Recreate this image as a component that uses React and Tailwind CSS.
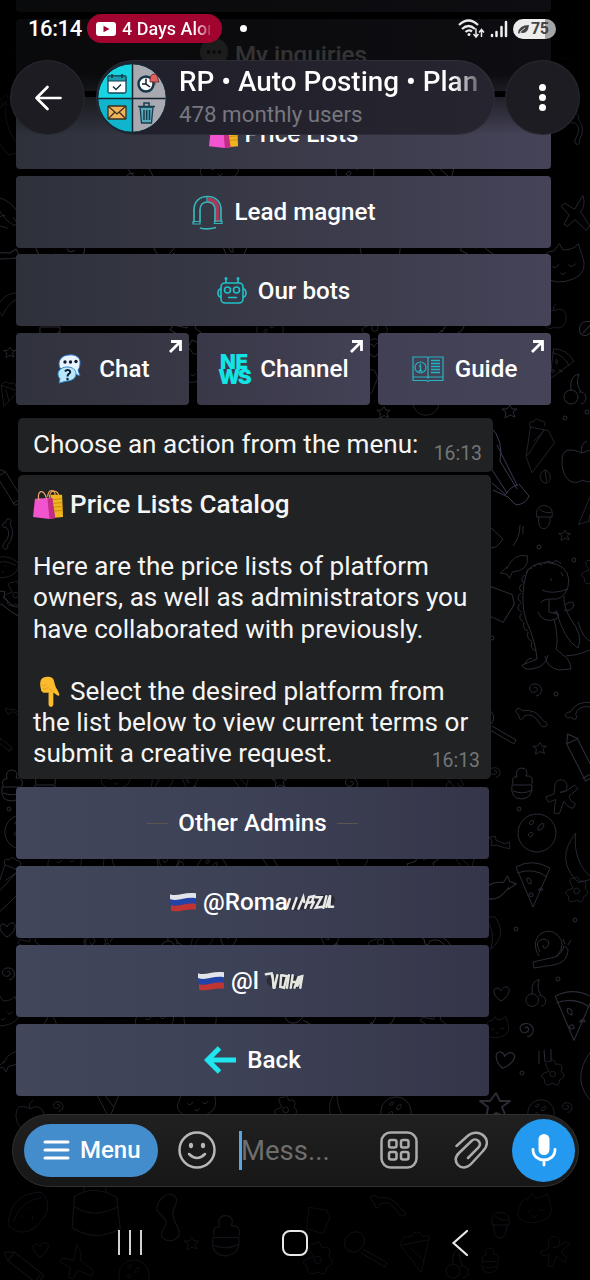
import { clsx } from "clsx";

const Bags = ({ className }) => (
  <svg viewBox="0 0 32 32" className={className} fill="none">
    <path d="M17 9c0-9 9-9 10 0M15 8c1-8 7-8 8-2" stroke="#e9a45b" strokeWidth="1.3" />
    <path d="M18 6h12l1 23-11 1z" fill="#efb51f" />
    <path d="M19 11l11-1M19 15l11-1M19 19l12-1M19 23l12-1" stroke="#c98b14" strokeWidth="1" />
    <path d="M2 10l17-1 4 21-6 1-17-2z" fill="#f253cf" />
    <path d="M15 10l5-1 3 21-6 1z" fill="#c22c83" />
    <path d="M6 12C4 1 11-1 14 10" stroke="#f0a070" strokeWidth="1.3" />
  </svg>
);

const HandDown = ({ className }) => (
  <svg viewBox="0 0 24 32" className={className}>
    <path
      d="M3 4c2-4 9-4 12-2 2 2 2 5 3 8 1 3 3 5 4 8 1 2-1 3-2 2l-4-3v12c0 4-5 4-5 0V17c-4 1-8 0-8-4-1-3-1-6 0-9z"
      fill="#fbbb2d"
    />
    <path d="M4 9c3 2 4 1 5-1M5 13c3 1 5 0 6-2M15 16l-3-3" stroke="#e39a20" strokeWidth="1" fill="none" />
  </svg>
);

const Flag = () => (
  <svg viewBox="0 0 27 20" className="h-5 w-[26px]">
    <path d="M0 2c8 3 15-3 27-1v6c-12-2-18 4-27 1z" fill="#e3e3ea" />
    <path d="M0 7c9 3 16-3 27-1v7c-12-2-17 4-26 1z" fill="#2343a6" />
    <path d="M1 13c9 3 15-3 26-1v6c-11-1-16 3-26 1z" fill="#c03431" />
  </svg>
);

const Magnet = () => (
  <svg viewBox="0 0 32 36" className="h-9 w-8" fill="none" stroke="#35b5b8" strokeWidth="1.7">
    <path d="M16 3.500c7 0 11.500 5 11.500 11.500v13h-4.500V16c0-4-2.500-7-7-7z" fill="#a43b5a" stroke="none" />
    <path d="M2 28.500V16C2 8 7 2.500 15.500 2.500S29 8 29 16v12M8 28V16c0-5 3-8 7.500-8S23 11 23 16v12" />
    <path d="M1 27.500h7v2.500H1zM22.500 27h7.500v2.500h-7.500z" strokeWidth="1.2" />
    <path d="M15 2v6" strokeWidth="1.200" />
    <path d="M8 34c4 1 11 1 16-.5" />
  </svg>
);

const Robot = () => (
  <svg viewBox="0 0 30 28" className="h-7 w-[30px]" fill="none" stroke="#1fc2c9" strokeWidth="1.6">
    <rect x="4" y="6" width="22" height="20" rx="4" />
    <path d="M9 6V2M21 6V2M4 12c-4 0-4 8 0 8M26 12c4 0 4 8 0 8M11 20.500h9" />
    <circle cx="10.500" cy="13" r="3" />
    <circle cx="19.500" cy="13" r="3" />
    <circle cx="9" cy="1.500" r=".7" />
    <circle cx="21" cy="1.500" r=".7" />
  </svg>
);

const ChatBubbles = () => (
  <svg viewBox="0 0 28 32" className="h-8 w-7">
    <path
      d="M14 2c7-1 12 3 11 9-.2 3-1 5-2 6l2 6-7-3c-8 1-14-3-14-9C4 6 8 2 14 2z"
      fill="#eaf4ff"
      stroke="#2e73c9"
      strokeWidth="1"
    />
    <path
      d="M12 14c6 0 9 3 9 7s-4 7-9 7l-8 2 1-4c-5-6 0-12 7-12z"
      fill="#b9e7fb"
      stroke="#2c88cf"
      strokeWidth="1"
    />
    <g fill="#121c2b">
      <circle cx="10" cy="9" r="1.700" />
      <circle cx="15.500" cy="9" r="1.700" />
      <circle cx="21" cy="8.500" r="1.700" />
      <circle cx="12.500" cy="26" r="1.200" />
    </g>
    <path d="M10 18.500c2-3 6-1 5 1-.5 1.500-2.500 1.500-2.500 4" stroke="#121c2b" strokeWidth="2" fill="none" />
  </svg>
);

const News = () => (
  <span className="flex w-[31px] flex-col items-center font-['Inter'] text-[20.500px] leading-[15.500px] font-black text-[#14e3e6]">
    <span className="tracking-[-0.3px]">NE</span>
    <span className="tracking-[-2.2px]">WS</span>
  </span>
);

const Book = () => (
  <svg viewBox="0 0 32 26" className="h-[26px] w-8" fill="none" stroke="#25b4c1" strokeWidth="1.2">
    <path d="M1 1h14l1 1 1-1h14v20H17l-1 1-1-1H1zM1 21v3.500h13.500l1.500 1 1.500-1H31V21M16 2v20" />
    <circle cx="8.500" cy="11.500" r="5.500" />
    <path d="M7 10h1.500v5M6.500 15h4M8.500 7.500v1.300M19 4.500h9M19 7.500h9M19 10.500h9M19 13.500h9M19 16.500h9" strokeWidth="1.400" />
  </svg>
);

const ArrowLeftCyan = () => (
  <svg viewBox="0 0 32 28" className="h-7 w-8" fill="none" stroke="#1fe6ee" strokeWidth="5">
    <path d="M32 14H5M15.500 2L3.500 14l12 12" />
  </svg>
);

const External = () => (
  <svg viewBox="0 0 13 13" className="absolute top-[7px] right-[7px] size-[13px]" fill="none" stroke="#fff" strokeWidth="2.800">
    <path d="M1 12L11 2M2 1.500h9.500V11" />
  </svg>
);

// strokes that hide the end of a user name
const Smudge = ({ long }) => (
  <svg
    viewBox={long ? "0 0 52 24" : "0 0 46 24"}
    className={clsx("h-6 blur-[0.4px]", long ? "-ml-[3px] w-[50px]" : "w-11")}
    fill="none"
    strokeLinecap="round"
  >
    <path d={long ? "M10 15L46 10" : "M10 12L36 13"} stroke="#1b1b1d" strokeWidth="12" opacity=".55" />
    {long ? (
      <g stroke="#e9e9e7" strokeWidth="2.600">
        <path d="M2 18L5 9M8 19L12 8M14 19l5-12 1 5" />
        <path d="M21 18l4-11 5-1-2 6-5 1M27 18l3-6" />
        <path d="M32 7h6l-6 11 7-1M40 18l3-12M43 17l4-12-1 12h4" />
      </g>
    ) : (
      <g stroke="#e4e7e0" strokeWidth="2.600">
        <path d="M3 5l6-1 1 5M10 6l1 13M15 6l-3 13M19 6l-1 12 4 1 3-12-5-1" />
        <path d="M27 6l-2 13M31 6l-2 13M30 13h4M33 19l4-11 4-1-2 12M36 17l4-9" />
      </g>
    )}
  </svg>
);

const KeyButton = ({ icon, children, external, className }) => (
  <div
    className={clsx(
      "relative flex h-[72px] min-w-0 flex-1 items-center justify-center rounded-[4px] bg-linear-to-r pt-px text-[24.200px] font-medium text-white",
      className,
    )}
  >
    {icon}
    {children}
    {external && <External />}
  </div>
);

const wide = "from-[#2e313a] via-[#3a3a49] via-50% to-[#454358]";
const lower = "from-[#41465a] via-[#3d4155] to-[#35354a]";

const doodles = {
  star: "M0-6l2 4 5 0-4 3 2 5-5-2-5 3 1-6-4-3 5 0z",
  dot: "M-2 0a2 2 0 1 0 4 0a2 2 0 1 0-4 0",
  spiral: "M0 0c3-3 5 3 1 4-6 2-8-7-1-8 9-1 10 11 2 12",
  heart: "M0 7C-8 2-9-6-4-6c3 0 4 3 4 3s2-5 6-4c5 2 1 10-6 14z",
  ball: "M-19 0a19 19 0 1 0 38 0a19 19 0 1 0-38 0M-8-10q4-5 5-1q-3 5-5 1M1-6q5-6 6-2q-2 6-6 5zM-9 2q4-5 5-1q-2 5-5 1",
  pizza: "M-17-17q16-9 34 1L0 23zM-16-11q17-6 30 4M-6-6q5 0 4 6q-5-1-4-6M5 6q4-4 5 0zM-4 10q4-3 4 2q-4 2-4-2",
  snail: "M-9 7q-7-12 4-13q8 2 3 8q-4 3-4-2M-10 11C-20-5-7-17 4-13Q16-7 12 5L7 12M-16 17l22-5q7-3 9-11q6 2 3 9q-2 8-14 10l-19 3zM16-1l-2-5M19 0l3-5",
  cake: "M-16 20l6-40 24 5 8 16-30 40zM-10-20q-4-8 4-7q3-7 9-1q8-1 6 7M-14 18L8-16M-6-1l13-13",
  leaf: "M0-9q-10 7-4 14q6 6 10-1q3-9-6-13zM0-9l2 15",
  acorn: "M-8 0q-2-12 8-13q11 1 9 13zM-6 0q-1 13 6 13q7-1 7-13M-5-9q5 5 13 4",
  fish: "M-8 4Q0-14 15-10q2 16-17 18l-3 7-3-5-7-1 7-7z",
  candy: "M-10 4l-6 2 3-9 6 2 10-8 2-7 8 4-5 6-9 8-3 7z",
  mag: "M-12-12a9 9 0 1 0 13 12a9 9 0 1 0-13-12M3 1l24 14-2 4L1 5",
  bone: "M-16-3q-5-2-2-6q4-2 6 2q15-3 24 12q5 0 3 5q-4 3-7-2Q0-6-10-1q-1 5-5 3z",
  cupcake: "M-10 2q-2 14 10 14q11-1 10-14zM-9 1q-2-8 4-7q-2-9 5-9q7 1 4 8q8-1 6 8M-9 8q10 4 19-1",
  ginger: "M-8-8a7 7 0 1 1 6 5l6-1 10-7 4 4-10 8q0 5 7 9l-3 5q-7-2-10-8l-5 14-6-1 2-15-8 3-3-6 9-3z",
  pencil: "M-12-18l9 3 20 32-9 6-20-32zM-12-9l10-6M5 21l9-6",
  moon: "M2-30Q-22 0 5 25l16-4Q-2 2 2-30z",
  flower: "M-4-4Q-15-20-2-18Q3-24 5-14Q18-16 13-4Q22 4 11 8Q10 20 1 13Q-12 20-11 7Q-22 1-4-4zM-3 0a4 4 0 1 0 8 0a4 4 0 1 0-8 0",
  cat: "M-22-6q2-14 12-13l6-8 4 7q12 0 17-7l4 12q8 20-9 27-20 8-32-2-8-6-2-16zM-12-2q4 4 7-2M6-4q4 5 8-1M-3 5q3 5 6-1",
  plane: "M-4-22q8 11 4 20l17 13-2 7-18-8-6 11-5-1 2-13-13-7 3-5 14 3z",
  rocket: "M-18-20q22 3 32 28l-9 8Q-17 1-18-20zM4 5l10 15M-6 3q-12 0-7 13l10 3",
  cherry: "M-9 9a7 7 0 1 0 14 0a7 7 0 1 0-14 0M6 4a6 6 0 1 1 2 12M-2 2Q-4-12 6-14M8 4Q2-5 6-14",
  bag: "M-17-9q17-10 35 1l3 26q-20 12-40-1zM-9-12q-1-15 9-15t9 15M-17 0q16 10 36 0",
  apple: "M0-12q-20-9-20 8c0 20 12 25 20 19 12 6 22-5 20-20Q15-20 0-12M0-12q-3-8 5-12",
  watermelon: "M-22 15Q-20-22 15-22q15 15-2 34t-35 3zM-16 11Q-10-12 15-16M2-6v3M-6 3v3M5 5v3",
  worm: "M-9-22c-8 12 12 12 4 22s8 14 12 7-9-14-3-25-8-14-13-4",
  cone: "M-18-12L8 22 17-19zM-18-12q0-13 13-11q7-12 15 0q11-4 7 5M-6-9l17 16",
  tag: "M-20-16l22 4 4 9-8 20-21-6z",
};

// [name, x, y, rotation, scale]
const scattered = [
  ["bone", 578, 130, 60, 0.8], ["plane", 580, 213, 20, 0.8], ["cat", 563, 268, 0, 0.9], ["apple", 554, 318, 0, 0.6],
  ["leaf", 586, 328, 50], ["pizza", 558, 365, 30, 0.7], ["cherry", 573, 388], ["cake", 538, 442, 0, 0.75],
  ["apple", 582, 465, 0, 1], ["leaf", 545, 477, 0, 0.8], ["acorn", 544, 517, 0, 0.9], ["star", 565, 535, 0, 0.8],
  ["dot", 565, 418], ["dot", 539, 547], ["fish", 514, 565, 0, 0.9], ["cone", 589, 512, 60, 0.7], ["tag", 508, 606, 10],
  ["flower", 592, 573, 0, 0.7], ["dot", 574, 560], ["dot", 492, 638], ["spiral", 534, 688], ["dot", 556, 694],
  ["bone", 533, 717, 0, 0.9], ["bone", 582, 708, -50, 0.9], ["star", 540, 748, 0, 0.9], ["mag", 489, 725], ["pencil", 579, 755, 5, 1.1],
  ["cupcake", 522, 783], ["ginger", 562, 795, 0, 0.9], ["dot", 519, 809], ["ball", 537, 833], ["candy", 498, 845, 60, 0.7],
  ["moon", 574, 860, 0, 0.9], ["pizza", 533, 884], ["fish", 500, 890, 190], ["flower", 576, 891, 0, 0.7], ["dot", 516, 929],
  ["dot", 575, 920], ["snail", 549, 945], ["spiral", 494, 771, 0, 0.8], ["moon", 495, 932, 190, 0.6], ["heart", 501, 994],
  ["cherry", 534, 992, 0, 0.9], ["dot", 558, 979], ["pizza", 574, 1015, 0, 1.1], ["spiral", 525, 1028, 0, 1.1],
  ["cat", 497, 1030, 0, 0.5], ["flower", 552, 1074, 0, 0.7], ["heart", 504, 1060, 10, 1.2], ["dot", 522, 1073],
  ["star", 496, 1105, 0, 2], ["ball", 541, 1113, 0, 0.7], ["spiral", 566, 1106, 0, 0.8], ["moon", 590, 1080],
  ["star", 384, 412, 0, 0.9], ["ball", 426, 402, 0, 0.7], ["dot", 587, 412], ["star", 510, 411],
  ["rocket", 10, 213, 0, 0.8], ["candy", 2, 258, 40], ["moon", 10, 300, 70, 0.6], ["star", 10, 352, 0, 0.8], ["cone", 6, 395, 30, 0.5],
  ["pencil", 8, 485, 0, 0.9], ["bone", 8, 535, 70, 0.8], ["watermelon", 3, 567, 40, 0.6], ["flower", 15, 595, 0, 0.7],
  ["candy", 4, 605, 80], ["bone", 15, 713, 0, 0.5], ["pencil", 4, 744, -20, 0.4], ["cupcake", 12, 785],
  ["ball", 22, 832, 0, 0.9], ["dot", 9, 809], ["cake", 10, 882, 10, 0.8], ["heart", 7, 930], ["spiral", 7, 972], ["cat", 3, 1015, 0, 0.7],
  ["fish", 10, 1060, 0, 0.8], ["apple", 30, 1117, 0, 0.7], ["spiral", 57, 1105, 0, 0.8], ["cone", 106, 1100, 10, 0.8], ["cat", 197, 1105, 0, 0.8],
  ["flower", 285, 1110, 0, 0.7], ["ball", 396, 1112, 0, 0.8], ["moon", 336, 1110, 0, 0.7],
  ["rocket", 140, 170], ["cat", 220, 170, 0, 0.8], ["ball", 355, 172], ["cone", 440, 172],
  ["cat", 60, 250, 20], ["mag", 170, 252], ["pizza", 235, 252], ["apple", 380, 248], ["plane", 485, 250],
  ["cupcake", 50, 325], ["plane", 195, 330], ["ball", 270, 330, 0, 0.7], ["flower", 374, 328, 0, 0.8],
  ["fish", 450, 328], ["cat", 193, 370, 0, 0.8], ["tag", 373, 380, 0, 0.8], ["heart", 374, 350],
  ["cupcake", 45, 783], ["cat", 116, 780, 0, 0.6], ["cake", 160, 781, 0, 0.6], ["pizza", 190, 783, 0, 0.6], ["cone", 240, 781, 0, 0.6],
  ["star", 280, 781], ["spiral", 350, 782], ["apple", 400, 783, 0, 0.6], ["rocket", 455, 780, 0, 0.6],
  ["cat", 65, 863, 0, 0.7], ["moon", 110, 865, 0, 0.7], ["snail", 168, 860, 0, 0.8],
  ["ball", 212, 870, 0, 0.8], ["pencil", 270, 862, 0, 0.8], ["apple", 352, 856, 0, 0.8], ["ginger", 425, 862], ["cone", 465, 864, 0, 0.6],
  ["plane", 35, 943, 0, 0.7], ["snail", 95, 942, 0, 0.8], ["cherry", 170, 939], ["cake", 200, 939, 0, 0.6], ["heart", 228, 942],
  ["pizza", 330, 940, 0, 0.8], ["flower", 380, 942, 0, 0.8], ["bone", 440, 942], ["worm", 50, 1021, 0, 0.8], ["cat", 155, 1020, 0, 0.8],
  ["apple", 200, 1020, 0, 0.8], ["mag", 300, 1019], ["fish", 380, 1020], ["plane", 440, 1021, 0, 0.8],
];

const faint = [
  ["watermelon", 28, 1212, 0, 0.9], ["heart", 40, 1250], ["pencil", 22, 1265, -20], ["plane", 80, 1262, 0, 0.8], ["ball", 134, 1275, 0, 0.8],
  ["bag", 95, 1207, 0, 1.2], ["worm", 170, 1228, 0, 1.2], ["cupcake", 226, 1235, 0, 1.3], ["star", 192, 1243],
  ["tag", 325, 1220, 0, 0.8], ["bone", 390, 1205], ["flower", 317, 1260, 0, 0.9], ["mag", 360, 1248], ["cone", 415, 1255, 0, 0.8],
  ["acorn", 500, 1225], ["cherry", 455, 1262], ["cupcake", 490, 1260, 0, 0.8], ["cat", 535, 1212, 0, 0.7], ["ginger", 555, 1250, 0, 0.8],
  ["pizza", 565, 75, 0, 0.8], ["flower", 560, 25, 0, 0.8], ["spiral", 567, 55], ["star", 6, 100], ["moon", 4, 130],
  ["cone", 8, 40, 0, 0.7],
];

const Doodles = ({ items }) =>
  items.map(([name, x, y, r = 0, s = 1], i) => (
    <path key={i} d={doodles[name]} transform={`translate(${x} ${y}) rotate(${r}) scale(${s})`} />
  ));

const Wallpaper = () => (
  <svg
    viewBox="0 0 590 1280"
    className="absolute inset-0 h-[1280px] w-[590px]"
    fill="none"
    stroke="#2d2b36"
    strokeWidth="1"
    strokeLinejoin="round"
  >
    <Doodles items={scattered} />
    <g stroke="#121118">
      <Doodles items={faint} />
    </g>
    {/* balloon */}
    <path d="M490 426q14 14 10 35l17 28M491 468l16 25M492 483l14 12M497 445l20 40M493 490l15 7M506 494q5-8 12-9M507 496l9 9q10-1 13-9l-10-12" stroke="#3b3950" />
    <path d="M487 524l16 15q-6 9-11 9l-8-10M520 525q0 12-7 21M523 526v8" />
    {/* dinosaur */}
    <path d="M527 571q10-12 29-7 16 6 12 23-5 14-16 12-10 0-11 4M527 571q-8 28-1 49 10 23 11 39l-15 6q1 5 10 4 14-2 16-14M545 656q2 12 14 14l12-1q-1-10-8-14l-7-6q3-10-2-30M542 590q10 5 26-1M556 610q8 30 22 38 6-12-8-30-7-13-6-22M549 600v12l8 2M538 612q5 12 18 7 7-6-3-7M565 605q8-6 9 0-2 7-10 5M578 622q5 17 14 20M590 650q-13 6-24 6" />
    <path d="M544 564q4-5 8-1 5-5 9 1M534 567q3-5 8-2M527 573q0-5 5-5M524 583q-5-4 1-8M522 592q-5-4 0-8M521 602q-6-4 0-9M521 612q-6-4 0-9M523 621q-6-3-1-8M528 631q-6-2-4-9M532 641q-6-2-4-9M536 651q-7-3-4-9M532 658q-6 1-7 6M550 578l2 3M561 572l2 4" />
    <path d="M539 1064v-13M545 1062l-1-12M551 1061v-12" />
  </svg>
);

const StatusBar = () => (
  <div className="flex h-[57px] items-center pl-7 text-white">
    <span className="w-[52px] text-[22px] font-medium tracking-[-0.4px]">16:14</span>
    <div className="ml-[7px] flex h-[29px] w-[135px] items-center rounded-full bg-[#a1052f] pl-[9px]">
      <svg viewBox="0 0 20 14" className="h-[14px] w-5 shrink-0">
        <rect width="20" height="14" rx="3" fill="#fff" />
        <path d="M7.500 3.700v6.600l6-3.300z" fill="#a1052f" />
      </svg>
      <span className="ml-[6px] w-[88px] overflow-hidden bg-linear-to-r from-white from-82% to-transparent to-105% bg-clip-text text-[18px] font-medium whitespace-nowrap text-transparent">
        4 Days Alor
      </span>
    </div>
    <span className="ml-[18px] size-[7px] rounded-full bg-white" />
    <svg viewBox="0 0 27 20" className="ml-[211px] h-5 w-[27px]" fill="none" stroke="#e9e9e9" strokeWidth="2.300">
      <path d="M1 6q9.500-9 19 0M4 10q6.500-6 13 0M7.500 13q3.500-3 6.500-.5" />
      <circle cx="11" cy="15.500" r="1.500" fill="#e9e9e9" stroke="none" />
      <path d="M18 9.500v8M15.500 15l2.500 3 2.500-3M23.500 18v-7.500M21 13.500l2.500-3 2.500 3" strokeWidth="1.500" />
    </svg>
    <svg viewBox="0 0 18 18" className="ml-[5px] h-[18px] w-[18px]" stroke="#eee" strokeWidth="2.500" strokeLinecap="round">
      <path d="M2 16v-1M6.500 16v-4M11.500 16V7M16 16V2" />
    </svg>
    <div className="ml-[5px] flex h-5 w-[43px] items-center rounded-full bg-linear-to-r from-[#ededed] from-75% to-[#a5a5a5] to-75% pl-[5px] text-[#454545]">
      <svg viewBox="0 0 11 10" className="h-[10px] w-[11px]">
        <path d="M0 9q1-8 11-8-1 8-6 8-2 0-3-1L1 10z" fill="#454545" />
        <path d="M2 8l5-4" stroke="#ededed" strokeWidth=".8" />
      </svg>
      <span className="ml-[2px] text-[16px] font-bold tracking-[-0.5px]">75</span>
    </div>
  </div>
);

const Avatar = () => (
  <svg viewBox="0 0 70 70" className="size-[70px] shrink-0">
    <clipPath id="avatar">
      <circle cx="35" cy="35" r="34" />
    </clipPath>
    <g clipPath="url(#avatar)">
      <path d="M0 0h35v35H0z" fill="#18d3e0" />
      <path d="M35 0h35v35H35zM35 35h35v35H35z" fill="#a9a9b1" />
      <path d="M0 35h35v35H0z" fill="#10b4cc" />
      <path d="M35.500 0v70M0 35.500h70" stroke="#14232b" strokeWidth="1.500" />
    </g>
    <circle cx="35" cy="35" r="34.300" fill="none" stroke="#102d38" strokeWidth="1" />
    <rect x="11" y="13" width="18" height="17" rx="1.500" fill="#fff" stroke="#124354" strokeWidth="1.300" />
    <path d="M11 13h18v5H11z" fill="#1c9aae" stroke="#124354" />
    <path d="M15 11v4M25 11v4M16 23.500l3 3 5-5" stroke="#123744" strokeWidth="1.500" fill="none" />
    <circle cx="49" cy="21" r="7.500" fill="#fff" stroke="#17384a" strokeWidth="2.500" />
    <path d="M49 15.500V21l4 3M45 21h4" stroke="#17202b" strokeWidth="1.500" fill="none" />
    <path d="M53 18q0-7 4-7t4 6l1 2h-9zM56 21h3" fill="#e0625c" stroke="#5a1d24" strokeWidth=".8" />
    <rect x="11" y="43" width="18" height="13" rx="1" fill="#f2b25b" stroke="#3c2e20" strokeWidth="1.300" />
    <path d="M11 43l9 8 9-8M11 56l7-7M29 56l-7-7" stroke="#3c2e20" strokeWidth="1.300" fill="none" />
    <path d="M43 44h13l-1.500 16h-10z" fill="#58a7ba" stroke="#173d4c" strokeWidth="1.300" />
    <path d="M41 43.500h17M47 43v-3h5v3M47 47v10M49.700 47v10M52.500 47v10" stroke="#173d4c" strokeWidth="1.500" fill="none" />
  </svg>
);

const pill = "rounded-full border border-white/5";

const Header = () => (
  <header className="absolute inset-x-0 top-0 h-[150px] bg-linear-to-b from-black/80 from-50% to-transparent to-90%">
    <StatusBar />
    <div className="mt-[3px] flex pl-[10px]">
      <div className={clsx(pill, "flex size-[75px] items-center justify-center bg-[#1c1c22]")}>
        <svg viewBox="0 0 28 26" className="h-[26px] w-7" fill="none" stroke="#fff" strokeWidth="2.700" strokeLinecap="round" strokeLinejoin="round">
          <path d="M26.500 13H2.500M13.500 2l-11 11 11 11" />
        </svg>
      </div>
      <div className={clsx(pill, "ml-[11px] flex h-[75px] w-[399px] items-center bg-linear-to-r from-[#20202a] to-[#26242f]")}>
        <Avatar />
        <div className="ml-3 w-[304px]">
          <div className="overflow-hidden bg-linear-to-r from-white from-90% to-transparent to-102% bg-clip-text text-[27.900px] leading-[34px] font-medium whitespace-nowrap text-transparent">
            RP • Auto Posting • Plan
          </div>
          <div className="text-[22.300px] leading-[31px] text-[#77777f]">478 monthly users</div>
        </div>
      </div>
      <div className={clsx(pill, "ml-[10px] flex size-[75px] flex-col items-center justify-center gap-[3px] bg-[#1d1c22]")}>
        <span className="size-[7px] rounded-full bg-white" />
        <span className="size-[7px] rounded-full bg-white" />
        <span className="size-[7px] rounded-full bg-white" />
      </div>
    </div>
  </header>
);

const Time = () => <span className="absolute right-[11px] bottom-[4px] text-[19.400px] leading-[28px] text-[#747677]">16:13</span>;

const Chat = () => (
  <main className="relative -mt-[60px] flex flex-col items-start pl-4">
    <div className="flex w-[535px] flex-col gap-[6.6px]">
      <KeyButton className={clsx(wide, "flex-none")} />
      <KeyButton
        className={clsx(wide, "flex-none gap-[7px] text-[23.800px]")}
        icon={
          <svg viewBox="0 0 28 28" className="-mt-[6px] size-7">
            <circle cx="14" cy="14" r="14" fill="#8d8d90" />
            <path d="M7 14h3M12.500 14h3M18 14h3" stroke="#222" strokeWidth="3" />
          </svg>
        }
      >
        <span>My inquiries</span>
      </KeyButton>
      <KeyButton className={clsx(wide, "flex-none gap-[6px]")} icon={<Bags className="size-[30px]" />}>
        <span>Price Lists</span>
      </KeyButton>
      <KeyButton className={clsx(wide, "flex-none gap-[11px]")} icon={<Magnet />}>
        <span>Lead magnet</span>
      </KeyButton>
      <KeyButton className={clsx(wide, "flex-none gap-[11px]")} icon={<Robot />}>
        <span>Our bots</span>
      </KeyButton>
      <div className="flex gap-2">
        <KeyButton className="gap-4 from-[#30323c] to-[#393847]" icon={<ChatBubbles />} external>
          <span>Chat</span>
        </KeyButton>
        <KeyButton className="gap-[11px] from-[#393848] to-[#434155]" icon={<News />} external>
          <span>Channel</span>
        </KeyButton>
        <KeyButton className="gap-[11px] from-[#424055] to-[#454358]" icon={<Book />} external>
          <span>Guide</span>
        </KeyButton>
      </div>
    </div>

    <div className="relative mt-[13px] ml-[2px] h-[54px] w-[475px] rounded-[5px] bg-[#202223] pt-[11px] pl-[15px] text-[26.100px] leading-[31px] text-[#f5f5f5]">
      Choose an action from the menu:
      <Time />
    </div>

    <div className="relative mt-[3px] ml-[2px] h-[304px] w-[473px] rounded-[5px] bg-[#202223] pt-[14px] pl-[15px] text-[26.100px] leading-[31.200px] text-[#f5f5f5]">
      <div className="flex items-center gap-[6px] font-medium">
        <Bags className="size-[31px]" />
        Price Lists Catalog
      </div>
      <p className="mt-[31px] whitespace-nowrap">
        Here are the price lists of platform
        <br />
        owners, as well as administrators you
        <br />
        have collaborated with previously.
      </p>
      <div className="mt-[31px] whitespace-nowrap">
        <div className="flex items-center gap-[9px]">
          <HandDown className="-mb-px ml-[5px] h-[31px] w-[23px]" />
          Select the desired platform from
        </div>
        the list below to view current terms or
        <br />
        submit a creative request.
      </div>
      <Time />
    </div>

    <div className="mt-2 flex w-[473px] flex-col gap-[6.900px]">
      <KeyButton className={clsx(lower, "flex-none gap-[10px]")}>
        <span className="h-px w-[21px] bg-[#5d5450]" />
        <span>Other Admins</span>
        <span className="h-px w-[21px] bg-[#5d5450]" />
      </KeyButton>
      <KeyButton className={clsx(lower, "flex-none")} icon={<Flag />}>
        <span className="ml-[7px]">@Roma</span>
        <Smudge long />
      </KeyButton>
      <KeyButton className={clsx(lower, "flex-none")} icon={<Flag />}>
        <span className="mr-[4px] ml-[7px]">@l</span>
        <Smudge />
      </KeyButton>
      <KeyButton className={clsx(lower, "flex-none gap-[11px]")} icon={<ArrowLeftCyan />}>
        <span>Back</span>
      </KeyButton>
    </div>
  </main>
);

const Composer = () => (
  <div className="relative mt-[18px] ml-3 flex h-[73px] w-[567px] items-center rounded-full border border-[#303030] bg-linear-to-b from-[#202020] to-[#171717] pl-[11px]">
    <div className="flex h-[53px] w-[134px] items-center rounded-full bg-[#438dcd] pl-[19px] text-[24px] font-medium text-white">
      <svg viewBox="0 0 27 20" className="mr-[10px] h-5 w-[27px]" stroke="#fff" strokeWidth="3" strokeLinecap="round">
        <path d="M2 2h23M2 10h23M2 18h23" />
      </svg>
      Menu
    </div>
    <svg viewBox="0 0 38 38" className="ml-5 size-[38px]" fill="none" stroke="#b7b7b7" strokeWidth="2.500" strokeLinecap="round">
      <circle cx="19" cy="19" r="17.500" />
      <path d="M11 23q8 8 16 0" />
      <ellipse cx="13" cy="14.500" rx="2.100" ry="2.800" fill="#b7b7b7" stroke="none" />
      <ellipse cx="25" cy="14.500" rx="2.100" ry="2.800" fill="#b7b7b7" stroke="none" />
    </svg>
    <span className="ml-[23px] h-[39px] w-[3px] bg-[#5aa4e0]" />
    <span className="w-[103px] text-[27.500px] text-[#6e6e6e]">
      <span className="-ml-px">Mess...</span>
    </span>
    <svg viewBox="0 0 38 38" className="ml-[35px] size-[38px]" fill="none" stroke="#ababab" strokeWidth="2.500">
      <rect x="1.500" y="1.500" width="35" height="35" rx="9" />
      <rect x="9" y="9" width="7.500" height="7.500" rx="2" />
      <rect x="21" y="9" width="7.500" height="7.500" rx="2" />
      <rect x="9" y="21" width="7.500" height="7.500" rx="2" />
      <rect x="21" y="21" width="7.500" height="7.500" rx="2" />
    </svg>
    <svg viewBox="0 0 34 38" className="ml-[36px] h-[38px] w-[34px]" fill="none" stroke="#ababab" strokeWidth="2.500" strokeLinecap="round">
      <path d="M2.500 15L13 5.500C19 0 26 1 30 5s4 10-1 15L17 33c-4 4.500-10 4.500-13 1s-3-8 1-12L17.500 10c2-2 5-2 7 0s2 4 0 6.500L14 27" />
    </svg>
    <div className="ml-6 flex size-[63px] items-center justify-center rounded-full bg-[#2399ef]">
      <svg viewBox="0 0 26 34" className="h-[34px] w-[26px]" fill="none" stroke="#fff" strokeWidth="2.800" strokeLinecap="round">
        <rect x="7.500" y="1" width="11" height="21" rx="5.500" fill="#fff" stroke="none" />
        <path d="M2 16.500c0 14 22 14 22 0M13 27.500V32" />
      </svg>
    </div>
  </div>
);

const NavBar = () => (
  <footer className="relative mt-[42px] flex items-center pl-[118px]">
    <div className="flex gap-[9px]">
      <span className="h-[25px] w-[2px] bg-[#d2d2d2]" />
      <span className="h-[25px] w-[2px] bg-[#d2d2d2]" />
      <span className="h-[25px] w-[2px] bg-[#d2d2d2]" />
    </div>
    <span className="ml-[140px] h-[26px] w-[26px] rounded-[8px] border-2 border-[#e8e8e8]" />
    <svg viewBox="0 0 18 28" className="ml-[143px] h-7 w-[18px]" fill="none" stroke="#e8e8e8" strokeWidth="2.200" strokeLinecap="round">
      <path d="M16 2L2.500 14 16 26" />
    </svg>
  </footer>
);

export default function App() {
  return (
    <div className="relative flow-root h-[1280px] w-[590px] overflow-hidden bg-black font-['Roboto',sans-serif]">
      <Wallpaper />
      <Chat />
      <Composer />
      <NavBar />
      <Header />
    </div>
  );
}
